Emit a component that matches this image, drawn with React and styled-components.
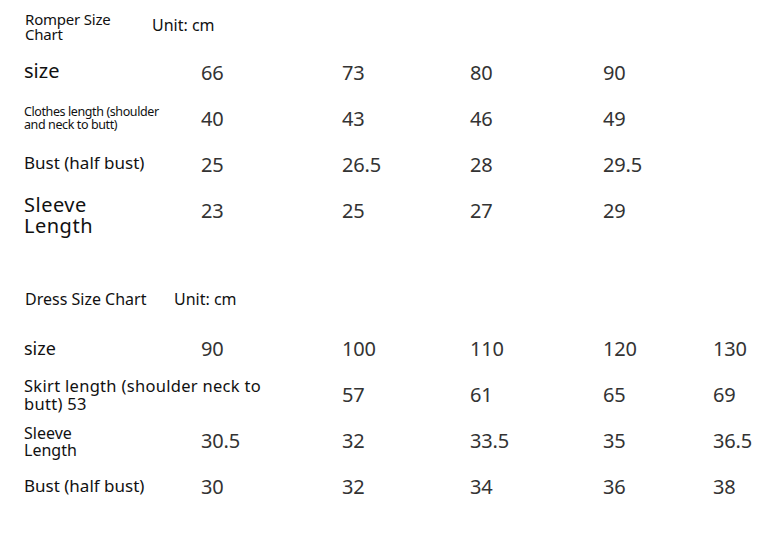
import React from "react";
import styled, { createGlobalStyle } from "styled-components";

const Global = createGlobalStyle`
  html, body { margin: 0; padding: 0; background: #fff; }
  body { width: 779px; height: 558px; overflow: hidden; }
`;

const Page = styled.div`
  padding: 0 0 0 24px;
  font-family: "Noto Sans", "Open Sans", sans-serif;
  color: #111;
`;

const Section = styled.section`
  padding-top: ${(p) => p.$top}px;
`;

const Header = styled.div`
  display: grid;
  grid-template-columns: ${(p) => p.$cols};
  align-items: start;
  height: ${(p) => p.$h}px;
`;

const Title = styled.div`
  font-size: ${(p) => p.$size}px;
  line-height: ${(p) => p.$lh}px;
  letter-spacing: ${(p) => p.$ls || 0}px;
  padding-left: ${(p) => p.$pl || 0}px;
`;

const Unit = styled.div`
  font-size: 16px;
  line-height: 18px;
  padding-top: ${(p) => p.$pt || 0}px;
`;

const Grid = styled.div`
  display: grid;
  grid-template-columns: 177px 141px 128px 133px 110px 1fr;
  grid-auto-rows: 46px;
  align-items: center;
`;

const Label = styled.div`
  grid-column: 1 / span ${(p) => p.$span || 1};
  font-size: ${(p) => p.$size}px;
  line-height: ${(p) => p.$lh}px;
  letter-spacing: ${(p) => p.$ls || 0}px;
  transform: translateY(${(p) => p.$dy || 0}px);
  white-space: nowrap;
`;

const Num = styled.div`
  font-family: "Noto Sans", sans-serif;
  font-size: 20px;
  line-height: 24px;
  color: #333;
  letter-spacing: -0.2px;
`;

const Row = ({ label, values }) => (
  <>
    {label}
    {values.map((v, i) => (
      <Num key={i}>{v}</Num>
    ))}
  </>
);

export default function App() {
  return (
    <>
      <Global />
      <Page>
        <Section $top={12}>
          <Header $cols="128px 1fr" $h={38}>
            <Title $size={15} $lh={15} $ls={-0.2} $pl={1}>
              Romper Size
              <br />
              Chart
            </Title>
            <Unit $pt={4}>Unit: cm</Unit>
          </Header>
          <Grid>
            <Row
              label={<Label $size={20} $lh={24} $dy={-2}>size</Label>}
              values={["66", "73", "80", "90"]}
            />
            <Row
              label={
                <Label $size={12.5} $lh={13} $ls={-0.4} $dy={-1}>
                  Clothes length (shoulder
                  <br />
                  and neck to butt)
                </Label>
              }
              values={["40", "43", "46", "49"]}
            />
            <Row
              label={<Label $size={17} $lh={20} $dy={-2}>Bust (half bust)</Label>}
              values={["25", "26.5", "28", "29.5"]}
            />
            <Row
              label={
                <Label $size={20} $lh={21} $ls={0.5} $dy={4}>
                  Sleeve
                  <br />
                  Length
                </Label>
              }
              values={["23", "25", "27", "29"]}
            />
          </Grid>
        </Section>
        <Section $top={56}>
          <Header $cols="150px 1fr" $h={36}>
            <Title $size={16} $lh={18} $pl={1}>
              Dress Size Chart
            </Title>
            <Unit>Unit: cm</Unit>
          </Header>
          <Grid>
            <Row
              label={<Label $size={18} $lh={22} $dy={-1}>size</Label>}
              values={["90", "100", "110", "120", "130"]}
            />
            <Row
              label={
                <Label $size={16.5} $lh={18} $ls={0.3} $span={2}>
                  Skirt length (shoulder neck to
                  <br />
                  butt) 53
                </Label>
              }
              values={["57", "61", "65", "69"]}
            />
            <Row
              label={
                <Label $size={16} $lh={17} $dy={1}>
                  Sleeve
                  <br />
                  Length
                </Label>
              }
              values={["30.5", "32", "33.5", "35", "36.5"]}
            />
            <Row
              label={<Label $size={17} $lh={20} $dy={-1}>Bust (half bust)</Label>}
              values={["30", "32", "34", "36", "38"]}
            />
          </Grid>
        </Section>
      </Page>
    </>
  );
}
